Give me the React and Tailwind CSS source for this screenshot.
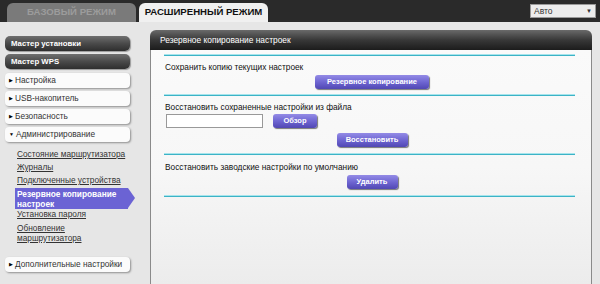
import React from "react";

const font = { fontFamily: '"Liberation Sans", Arial, sans-serif' };

function DarkBtn({ children }) {
  return (
    <div className="h-[15px] rounded-[5px] bg-gradient-to-b from-[#707070] via-[#4a4a4a] to-[#2e2e2e] shadow-[1px_1px_1px_#9a9a9a] flex items-center pl-[6px] text-white text-[7.8px] font-bold">
      {children}
    </div>
  );
}

function WhiteBtn({ children, open }) {
  return (
    <div className="h-[15px] rounded-[4px] bg-[#fbfbfb] shadow-[1px_1px_2px_#8f8f8f] flex items-center pl-[4px] text-[#333] text-[8.3px]">
      <span className="text-[5px] text-black mr-[2px] leading-none">{open ? "▼" : "▶"}</span>
      {children}
    </div>
  );
}

function Sub({ children }) {
  return <div className="pl-[12px] text-[8.3px] text-[#333] underline leading-[11px] whitespace-nowrap">{children}</div>;
}

function PBtn({ children, w }) {
  return (
    <div
      className={`h-[14px] ${w} rounded-[3px] bg-gradient-to-b from-[#948be6] via-[#6f66d2] to-[#5147b4] shadow-[1px_1px_1px_#777] text-white text-[7.5px] font-bold flex items-center justify-center`}
    >
      {children}
    </div>
  );
}

function Line() {
  return <div className="h-[2px] bg-[#3cb3c6] border-t border-[#a6e4ec] ml-[13px] mr-[16px]" />;
}

export default function App() {
  return (
    <div className="w-[600px] h-[284px] overflow-hidden bg-[#e6e6e6] flex flex-col" style={font}>
      <div className="h-[22px] bg-[#2a2a2a] flex items-end pl-[7px] pr-[4px] shrink-0">
        <div className="w-[129px] h-[19px] rounded-t-[6px] bg-[#7a7a7a] text-[#9c9c9c] text-[9.6px] font-bold flex items-center justify-center">
          БАЗОВЫЙ РЕЖИМ
        </div>
        <div className="ml-[3px] w-[129px] h-[19px] rounded-t-[6px] bg-[#f0f0f0] text-[#111] text-[9.6px] font-bold flex items-center justify-center">
          РАСШИРЕННЫЙ РЕЖИМ
        </div>
        <div className="ml-auto self-center w-[66px] h-[14px] bg-[#ececec] border border-[#999] flex items-center justify-between px-[3px] text-[8.5px] text-[#333]">
          <span>Авто</span>
          <span className="text-[6px]">▼</span>
        </div>
      </div>
      <div className="flex flex-1">
        <div className="w-[125px] ml-[5px] mt-[14px] flex flex-col shrink-0">
          <DarkBtn>Мастер установки</DarkBtn>
          <div className="h-[3px]" />
          <DarkBtn>Мастер WPS</DarkBtn>
          <div className="h-[4px]" />
          <WhiteBtn>Настройка</WhiteBtn>
          <div className="h-[3px]" />
          <WhiteBtn>USB-накопитель</WhiteBtn>
          <div className="h-[3px]" />
          <WhiteBtn>Безопасность</WhiteBtn>
          <div className="h-[3px]" />
          <WhiteBtn open>Администрирование</WhiteBtn>
          <div className="h-[7px]" />
          <div className="flex flex-col gap-[2px]">
            <Sub>Состояние маршрутизатора</Sub>
            <Sub>Журналы</Sub>
            <Sub>Подключенные устройства</Sub>
          </div>
          <div className="relative mt-[2px] ml-[10px] w-[113px] h-[21px] bg-[#6b63d4] text-white text-[8.3px] font-bold leading-[10px] pl-[2px] pt-[1px]">
            Резервное копирование
            <br />
            настроек
            <div className="absolute right-[-7px] top-0 w-0 h-0 border-y-[10.5px] border-y-transparent border-l-[7px] border-l-[#6b63d4]" />
          </div>
          <div className="flex flex-col gap-[2px]">
            <Sub>Установка пароля</Sub>
            <div className="pl-[12px] text-[8.3px] text-[#333] leading-[10px] mt-[1px]">
              <span className="underline">Обновление</span>
              <br />
              <span className="underline">маршрутизатора</span>
            </div>
          </div>
          <div className="h-[14px]" />
          <WhiteBtn>Дополнительные настройки</WhiteBtn>
        </div>
        <div className="ml-[20px] mr-[8px] mt-[8px] flex-1 flex flex-col">
          <div className="h-[20px] rounded-t-[6px] bg-gradient-to-b from-[#6a6a6a] via-[#383838] to-[#1c1c1c] text-white text-[8.4px] flex items-center pl-[10px] shrink-0">
            Резервное копирование настроек
          </div>
          <div className="flex-1 border-x border-[#8a8a8a] bg-gradient-to-b from-[#fafafa] via-[#f7f7f7] to-[#ececec] text-[8.3px] text-[#111]">
            <div className="h-[4px]" />
            <Line />
            <div className="pl-[14px] mt-[6px] leading-[11px]">Сохранить копию текущих настроек</div>
            <div className="flex justify-center mt-[2px] pl-[2px]">
              <PBtn w="w-[114px]">Резервное копирование</PBtn>
            </div>
            <div className="h-[5px]" />
            <Line />
            <div className="pl-[14px] mt-[6px] leading-[11px]">Восстановить сохраненные настройки из файла</div>
            <div className="flex items-center pl-[15px] mt-[1px]">
              <div className="w-[97px] h-[14px] bg-white border border-[#999]" />
              <div className="ml-[10px]">
                <PBtn w="w-[44px]">Обзор</PBtn>
              </div>
            </div>
            <div className="flex justify-center mt-[5px] pl-[2px]">
              <PBtn w="w-[71px]">Восстановить</PBtn>
            </div>
            <div className="h-[6px]" />
            <Line />
            <div className="pl-[14px] mt-[7px] leading-[11px]">Восстановить заводские настройки по умолчанию</div>
            <div className="flex justify-center mt-[2px] pl-[2px]">
              <PBtn w="w-[51px]">Удалить</PBtn>
            </div>
            <div className="h-[6px]" />
            <Line />
          </div>
        </div>
      </div>
    </div>
  );
}
